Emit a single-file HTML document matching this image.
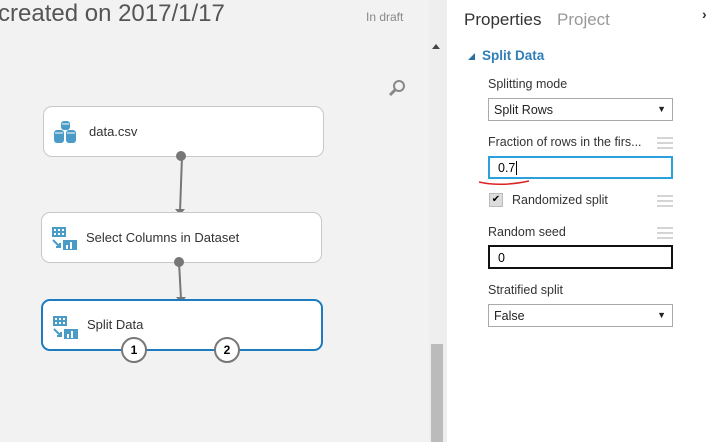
<!DOCTYPE html><html><head><style>
body{margin:0;width:717px;height:442px;overflow:hidden;background:#f2f2f2;font-family:"Liberation Sans",sans-serif;position:relative}
.a{position:absolute}
.node{position:absolute;background:#fff;border:1px solid #c8c8c8;border-radius:9px;box-sizing:border-box}
.node span{position:absolute;left:44px;top:17px;font-size:13px;color:#333}
.lbl{position:absolute;left:488px;font-size:12.5px;color:#333}
.sel{position:absolute;left:488px;width:185px;height:23px;border:1px solid #aaa;box-sizing:border-box;background:#fff;font-size:12.5px;padding:4px 5px;color:#222}
.sel:after{content:"▼";position:absolute;right:6px;top:5px;font-size:9px}
.ham{position:absolute;left:657px;width:16px;height:12px;background:repeating-linear-gradient(#d4d4d4 0 2px,transparent 2px 5px)}
.circ{position:absolute;width:22px;height:22px;border:2px solid #777;border-radius:50%;background:#fff;font-size:12px;font-weight:bold;text-align:center;line-height:22px;box-sizing:content-box}
</style></head><body>
<div class="a" style="left:-2px;top:0px;font-size:24px;color:#555">created on 2017/1/17</div>
<div class="a" style="left:366px;top:10px;font-size:12px;color:#888">In draft</div>
<svg class="a" style="left:388px;top:78px" width="20" height="20"><circle cx="11" cy="8" r="5" fill="none" stroke="#888" stroke-width="2"/><line x1="7" y1="12" x2="2" y2="17" stroke="#888" stroke-width="3"/></svg>
<div class="a" style="left:429px;top:0;width:18px;height:442px;background:#eee"></div>
<div class="a" style="left:432px;top:44px;width:0;height:0;border-left:4px solid transparent;border-right:4px solid transparent;border-bottom:5px solid #444"></div>
<div class="a" style="left:431px;top:344px;width:12px;height:98px;background:#bbb"></div>
<div class="a" style="left:447px;top:0;width:270px;height:442px;background:#fff"></div>
<svg class="a" style="left:0;top:0" width="430" height="442"><line x1="182" y1="156" x2="180" y2="212" stroke="#777" stroke-width="2"/><line x1="179" y1="262" x2="181" y2="299" stroke="#777" stroke-width="2"/>
<polygon points="175,209 185,209 180,215" fill="#777"/><polygon points="176,297 186,297 181,303" fill="#777"/></svg>
<div class="node" style="left:43px;top:106px;width:281px;height:51px"><span style="left:45px">data.csv</span>
<svg class="a" style="left:9px;top:12px" width="26" height="26"><g fill="#4a9cc7"><rect x="8" y="2" width="9" height="9" rx="3"/><rect x="1" y="11" width="10" height="13" rx="3"/><rect x="13" y="11" width="10" height="13" rx="3"/></g><g fill="#fff" opacity=".5"><rect x="2" y="13" width="8" height="2"/><rect x="14" y="13" width="8" height="2"/><rect x="9" y="4" width="7" height="2"/></g></svg></div>
<div class="a" style="left:176px;top:151px;width:10px;height:10px;border-radius:50%;background:#777"></div>
<div class="node" style="left:41px;top:212px;width:281px;height:51px"><span>Select Columns in Dataset</span>
<svg class="a" style="left:10px;top:14px" width="26" height="26"><g fill="#4a9cc7"><rect x="0" y="0" width="14" height="10"/><rect x="11" y="13" width="14" height="10"/></g><g fill="#fff"><rect x="2" y="2" width="2" height="2"/><rect x="6" y="2" width="2" height="2"/><rect x="10" y="2" width="2" height="2"/><rect x="2" y="6" width="2" height="2"/><rect x="6" y="6" width="2" height="2"/><rect x="10" y="6" width="2" height="2"/><rect x="14" y="18" width="2" height="4"/><rect x="18" y="15" width="2" height="7"/></g><path d="M1 13 L8 20 M4 20 L8 20 L8 16" stroke="#4a9cc7" stroke-width="2" fill="none"/></svg></div>
<div class="a" style="left:174px;top:257px;width:10px;height:10px;border-radius:50%;background:#777"></div>
<div class="node" style="left:41px;top:299px;width:282px;height:52px;border:2px solid #1e7bbf"><span style="left:44px;top:16px">Split Data</span>
<svg class="a" style="left:10px;top:15px" width="26" height="26"><g fill="#4a9cc7"><rect x="0" y="0" width="14" height="10"/><rect x="11" y="13" width="14" height="10"/></g><g fill="#fff"><rect x="2" y="2" width="2" height="2"/><rect x="6" y="2" width="2" height="2"/><rect x="10" y="2" width="2" height="2"/><rect x="2" y="6" width="2" height="2"/><rect x="6" y="6" width="2" height="2"/><rect x="10" y="6" width="2" height="2"/><rect x="14" y="18" width="2" height="4"/><rect x="18" y="15" width="2" height="7"/></g><path d="M1 13 L8 20 M4 20 L8 20 L8 16" stroke="#4a9cc7" stroke-width="2" fill="none"/></svg></div>
<div class="circ" style="left:121px;top:337px">1</div>
<div class="circ" style="left:214px;top:337px">2</div>
<div class="a" style="left:464px;top:10px;font-size:17px;color:#333">Properties</div>
<div class="a" style="left:557px;top:10px;font-size:17px;color:#999">Project</div>
<div class="a" style="left:702px;top:6px;font-size:14px;color:#333;font-weight:bold">›</div>
<div class="a" style="left:468px;top:53px;width:0;height:0;border-left:7px solid transparent;border-bottom:7px solid #2c6f9e"></div>
<div class="a" style="left:482px;top:48px;font-size:13.5px;font-weight:bold;color:#2f7fb8">Split Data</div>
<div class="lbl" style="top:77px">Splitting mode</div>
<div class="sel" style="top:98px">Split Rows</div>
<div class="lbl" style="top:135px">Fraction of rows in the firs...</div><div class="ham" style="top:137px"></div>
<div class="a" style="left:488px;top:156px;width:185px;height:23px;border:2px solid #2ca0dd;box-sizing:border-box;font-size:12.5px;padding:3px 8px">0.7<span style="border-left:1px solid #000;margin-left:1px"></span></div>
<svg class="a" style="left:476px;top:178px" width="60" height="10"><path d="M3 4 Q25 9 53 3" stroke="#d22" stroke-width="1.5" fill="none"/></svg>
<div class="a" style="left:489px;top:193px;width:12px;height:12px;background:#ddd;border:1px solid #bbb;font-size:10px;line-height:12px;text-align:center">✔</div>
<div class="lbl" style="left:512px;top:193px">Randomized split</div><div class="ham" style="top:195px"></div>
<div class="lbl" style="top:225px">Random seed</div><div class="ham" style="top:227px"></div>
<div class="a" style="left:488px;top:245px;width:185px;height:24px;border:2px solid #111;box-sizing:border-box;font-size:12.5px;padding:4px 8px">0</div>
<div class="lbl" style="top:283px">Stratified split</div>
<div class="sel" style="top:304px">False</div>
</body></html>
